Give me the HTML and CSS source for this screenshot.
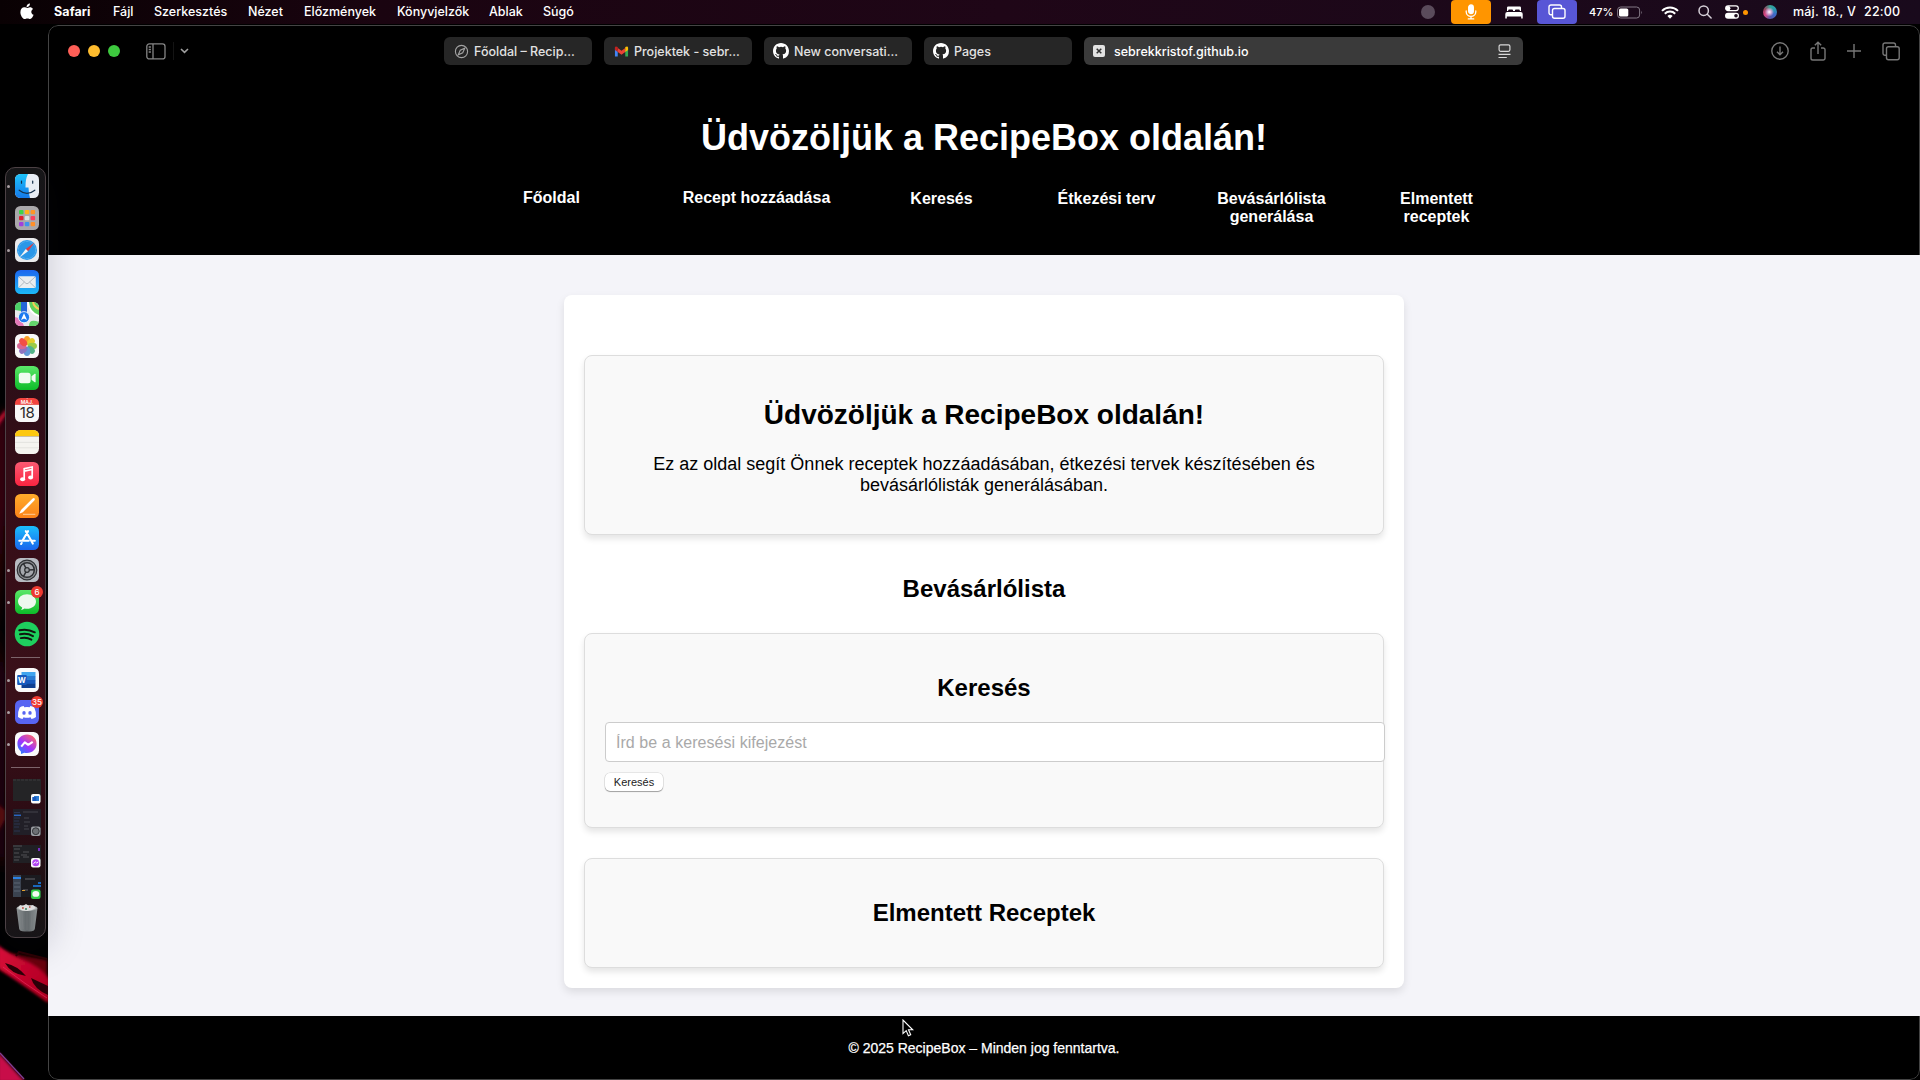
FILE: index.html
```html
<!DOCTYPE html>
<html lang="hu">
<head>
<meta charset="utf-8">
<title>Főoldal – RecipeBox</title>
<link rel="stylesheet" href="styles.css">
</head>
<body>
<div class="desktop">
  <nav class="menubar">
    <svg class="apple" viewBox="0 0 14 17"><path d="M9.9.4c.1 1.100-.3 2-.9 2.700-.6.700-1.500 1.200-2.400 1.100-.1-1 .3-2 .9-2.600C8.100.9 9.100.4 9.900.4zM7.100 5c.6 0 1.500-.8 2.900-.8 1.100 0 2.300.6 3 1.700-2.500 1.500-2.100 4.900.6 5.900-.5 1.500-2 4.200-3.500 4.200-1 0-1.400-.6-2.700-.6s-1.700.6-2.600.6C2.900 16.100.4 12.600.4 9.200.4 6 2.300 4.300 4.200 4.300 5.500 4.300 6.400 5 7.100 5z" fill="#fff"/></svg>
    <div class="menus"><b>Safari</b><span>Fájl</span><span>Szerkesztés</span><span>Nézet</span><span>Előzmények</span><span>Könyvjelzők</span><span>Ablak</span><span>Súgó</span></div>
    <div class="status">
      <i class="rec"></i>
      <span class="pill mic"><svg width="12" height="16" viewBox="0 0 12 16" fill="none" stroke="#fff" stroke-width="1.300" stroke-linecap="round"><rect x="3.700" y="1" width="4.600" height="8.500" rx="2.300" fill="#fff"/><path d="M1.200 7v.8a4.800 4.600 0 0 0 9.600 0V7M6 12.500v2.300M3.300 14.900h5.400"/></svg></span>
      <svg width="18" height="13" viewBox="0 0 18 13" fill="#fff"><path d="M2 5V1.800Q2 .6 3.200.6h11.600Q16 .6 16 1.800V5h-1.200V4.300q0-.9-.9-.9h-3q-.9 0-.9.9V5H8V4.300q0-.9-.9-.9h-3q-.9 0-.9.900V5zM.3 8Q.3 6 2.300 6h13.400q2 0 2 2v4.500h-1.500v-2H1.800v2H.3z"/></svg>
      <span class="pill share"><svg width="18" height="16" viewBox="0 0 18 16" fill="none" stroke="#fff" stroke-width="1.400"><path d="M4 10.800H3a2 2 0 0 1-2-2V3a2 2 0 0 1 2-2h8.500a2 2 0 0 1 2 2v1"/><rect x="4.500" y="4.500" width="12.500" height="9.800" rx="2"/></svg></span>
      <span class="pct">47%</span>
      <svg width="26" height="13" viewBox="0 0 26 13"><rect x=".6" y="1" width="22" height="11" rx="3" fill="none" stroke="#837985"/><rect x="2" y="2.500" width="9.300" height="8" rx="1.600" fill="#fff"/><path d="M24 4.800q1.500 1.700 0 3.400" fill="#837985"/></svg>
      <svg width="18" height="13" viewBox="0 0 18 13" fill="none" stroke="#fff" stroke-width="2"><path d="M1 4.900a11.400 11.400 0 0 1 16 0M3.800 7.800a7.300 7.300 0 0 1 10.400 0"/><path d="M6.400 10.100a3.700 3.700 0 0 1 5.200 0L9 12.700z" fill="#fff" stroke="none"/></svg>
      <svg width="14" height="14" viewBox="0 0 14 14" fill="none" stroke="#d6d0d8" stroke-width="1.500" stroke-linecap="round"><circle cx="5.700" cy="5.700" r="4.700"/><path d="m9.300 9.300 3.800 3.700"/></svg>
      <svg width="14" height="14" viewBox="0 0 14 14"><rect x=".7" y=".9" width="12.600" height="4.700" rx="2.350" fill="none" stroke="#fff" stroke-width="1.200"/><circle cx="3.100" cy="3.250" r="2.300" fill="#fff"/><rect y="7.700" width="14" height="6" rx="3" fill="#fff"/><circle cx="11" cy="10.700" r="1.800" fill="#201020"/></svg>
      <i class="dot"></i>
      <i class="siri"></i>
      <span class="date">máj. 18., V</span><span class="date">22:00</span>
    </div>
  </nav>

  <div class="stage">
    <aside class="side">
      <svg class="wallpaper" viewBox="0 0 48 1056" preserveAspectRatio="none">
        <defs>
          <filter id="soft" x="-50%" y="-50%" width="200%" height="200%"><feGaussianBlur stdDeviation="1.600"/></filter>
          <filter id="wide" x="-80%" y="-50%" width="260%" height="200%"><feGaussianBlur stdDeviation="5"/></filter>
          <linearGradient id="w1" x1="0" y1="0" x2="1" y2="1"><stop offset="0" stop-color="#e0083c"/><stop offset="1" stop-color="#a8041e"/></linearGradient>
        </defs>
        <rect width="48" height="1056" fill="#000"/>
        <path d="M-4 405 3 385 6 384V480L-4 620z" fill="#4a0410" filter="url(#wide)"/>
        <path d="M-3 396 6 385V391L-3 404z" fill="#c2082f" filter="url(#soft)"/>
        <path d="M-3 600 6 650 5 850-3 830z" fill="#2c0309" filter="url(#wide)"/>
        <path d="M-2 780 5 786V796L-2 808z" fill="#5a0710" filter="url(#soft)"/>
        <path d="M0 925 9 929 47 936V978L22 958 0 946z" fill="#6a0008" filter="url(#soft)"/>
        <path d="M-2 921Q8 930 24 936T49 955V979Q24 962-2 944z" fill="url(#w1)" filter="url(#soft)"/>
        <path d="M5 939q13 3 21 13-15-2-21-13zM31 954l17 8v9q-14-6-17-17z" fill="#2a0008"/>
        <path d="M16 932 19 928 47 935" fill="none" stroke="#2d0004" stroke-width="2"/>
        <path d="M3 943Q25 960 47 974" fill="none" stroke="#f23c6c" stroke-width="1" opacity=".5"/>
        <path d="M-2 1028 25 1058H-2z" fill="#c80a48" filter="url(#soft)"/>
        <path d="M0 1029 24 1055" stroke="#804096" stroke-width="1.200"/>
      </svg>
      <div class="dock">
        <div class="app run"><svg viewBox="0 0 24 24"><defs><linearGradient id="fb" x1="0" y1="0" x2="0" y2="1"><stop offset="0" stop-color="#1ec4fb"/><stop offset="1" stop-color="#1579ea"/></linearGradient></defs><rect width="24" height="24" rx="5.500" fill="#e9eef5"/><path d="M5.500 0H13Q10.300 5 10.500 13.500H13.500Q13.600 19 15 24H5.500A5.500 5.500 0 0 1 0 18.500V5.500A5.500 5.500 0 0 1 5.500 0z" fill="url(#fb)"/><path d="M6.500 7v2.200M17.700 7v2.200M4.200 16.200Q12 22.500 19.800 16.200" fill="none" stroke="#15304c" stroke-width="1.200" stroke-linecap="round"/></svg></div>
        <div class="app"><svg viewBox="0 0 24 24"><rect width="24" height="24" rx="5.500" fill="#aaa8ab"/><g><rect x="4" y="4" width="4.500" height="4.200" rx="1" fill="#3ed447"/><rect x="9.800" y="4" width="4.500" height="4.200" rx="1" fill="#ffb31a"/><rect x="15.600" y="4" width="4.500" height="4.200" rx="1" fill="#fd9426"/><rect x="4" y="10" width="4.500" height="4.200" rx="1" fill="#e02030"/><rect x="9.800" y="10" width="4.500" height="4.200" rx="1" fill="#dce0e2"/><rect x="15.600" y="10" width="4.500" height="4.200" rx="1" fill="#fa3f5d"/><rect x="4" y="16" width="4.500" height="4.200" rx="1" fill="#a040dd"/><rect x="9.800" y="16" width="4.500" height="4.200" rx="1" fill="#3f94ec"/><rect x="15.600" y="16" width="4.500" height="4.200" rx="1" fill="#ff8f29"/></g></svg></div>
        <div class="app run"><svg viewBox="0 0 24 24"><rect width="24" height="24" rx="5.500" fill="#e9eaec"/><circle cx="12" cy="12" r="10" fill="#2a97e8"/><circle cx="12" cy="12" r="8.600" fill="none" stroke="#8dcbf5" stroke-width=".8" stroke-dasharray=".6 .8"/><path d="M19.500 4.500 13.100 13.200 10.800 10.900z" fill="#e8383c"/><path d="M4.500 19.500 13.100 13.200 10.800 10.900z" fill="#f4f4f4"/></svg></div>
        <div class="app"><svg viewBox="0 0 24 24"><defs><linearGradient id="ml" x1="0" y1="0" x2="0" y2="1"><stop offset="0" stop-color="#1c66ee"/><stop offset="1" stop-color="#1cb8f8"/></linearGradient></defs><rect width="24" height="24" rx="5.500" fill="url(#ml)"/><rect x="3.200" y="6.200" width="17.600" height="11.800" rx="1.500" fill="#e9edf0"/><path d="m3.700 6.800 7.200 6.500q1.100.9 2.200 0l7.200-6.500M3.800 17.500l5.600-5.400M20.200 17.500l-5.600-5.400" fill="none" stroke="#9fa9b3" stroke-width=".8"/></svg></div>
        <div class="app"><svg viewBox="0 0 24 24"><defs><clipPath id="mc"><rect width="24" height="24" rx="5.500"/></clipPath></defs><g clip-path="url(#mc)"><rect width="24" height="24" fill="#e9e9ec"/><path d="M13 0H24V14Q14 12 13 0z" fill="#5fd05c"/><path d="M0 8 6 9V0H0z" fill="#4ed068"/><path d="M14 24Q14 16 24 20v4z" fill="#63d56b"/><path d="M0 15Q7 16 9 24H0z" fill="#e579b8"/><path d="M6 0h6v12H6z" fill="#2467d8"/><path d="M13 0q1 11 11 14" fill="none" stroke="#fff" stroke-width="2"/><path d="M18 0q1 5 6 7" fill="none" stroke="#f5cb56" stroke-width="2"/></g><circle cx="9" cy="15.200" r="5.600" fill="#1c7af0" stroke="#fff" stroke-width=".8"/><path d="M9 11.200 12 18 9 16.500 6 18z" fill="#fff"/></svg></div>
        <div class="app"><svg viewBox="0 0 24 24"><rect width="24" height="24" rx="5.500" fill="#f8f8f8"/><g opacity=".95"><ellipse cx="12" cy="6.600" rx="3.200" ry="4.600" fill="#fb9c20"/><ellipse cx="12" cy="6.600" rx="3.200" ry="4.600" fill="#e5cb22" transform="rotate(45 12 12)"/><ellipse cx="12" cy="6.600" rx="3.200" ry="4.600" fill="#99c93e" transform="rotate(90 12 12)"/><ellipse cx="12" cy="6.600" rx="3.200" ry="4.600" fill="#4bb082" transform="rotate(135 12 12)"/><ellipse cx="12" cy="6.600" rx="3.200" ry="4.600" fill="#5a92d6" transform="rotate(180 12 12)"/><ellipse cx="12" cy="6.600" rx="3.200" ry="4.600" fill="#8a6cbe" transform="rotate(225 12 12)"/><ellipse cx="12" cy="6.600" rx="3.200" ry="4.600" fill="#d6608f" transform="rotate(270 12 12)"/><ellipse cx="12" cy="6.600" rx="3.200" ry="4.600" fill="#f2463d" transform="rotate(315 12 12)"/></g></svg></div>
        <div class="app"><svg viewBox="0 0 24 24"><defs><linearGradient id="ft" x1="0" y1="0" x2="0" y2="1"><stop offset="0" stop-color="#5ce769"/><stop offset="1" stop-color="#0dbc29"/></linearGradient></defs><rect width="24" height="24" rx="5.500" fill="url(#ft)"/><rect x="3.800" y="6.800" width="11.800" height="10.400" rx="2.500" fill="#f0fbf1"/><path d="m16.500 10.300 3.200-2.500q.9-.5.9.5v7.400q0 1-.9.500l-3.200-2.500z" fill="#f0fbf1"/></svg></div>
        <div class="app"><svg viewBox="0 0 24 24"><path d="M0 6.200h24v12.300a5.500 5.500 0 0 1-5.500 5.500h-13A5.500 5.500 0 0 1 0 18.500z" fill="#f8f8f8"/><path d="M0 6.800V5.500A5.500 5.500 0 0 1 5.500 0h13A5.500 5.500 0 0 1 24 5.500v1.300z" fill="#f3443f"/><text x="12" y="5.700" font-size="5" font-weight="600" fill="#fff" text-anchor="middle">MÁJ.</text><text x="12" y="20" font-size="15" fill="#2b2b2b" text-anchor="middle" letter-spacing="-.5">18</text></svg></div>
        <div class="app"><svg viewBox="0 0 24 24"><rect width="24" height="24" rx="5.500" fill="#f5f4f0"/><path d="M0 6V5.500A5.500 5.500 0 0 1 5.500 0h13A5.500 5.500 0 0 1 24 5.500V6z" fill="#fdc80e"/><path d="M0 6.500h24" stroke="#b9a980" stroke-width=".7"/><path d="M0 12.400h24M0 17.800h24" stroke="#dcdcd9" stroke-width=".7"/></svg></div>
        <div class="app"><svg viewBox="0 0 24 24"><defs><linearGradient id="mu" x1="0" y1="0" x2="0" y2="1"><stop offset="0" stop-color="#fb5a72"/><stop offset="1" stop-color="#fa2440"/></linearGradient></defs><rect width="24" height="24" rx="5.500" fill="url(#mu)"/><path d="M9.200 17V6.700L17.200 5v10.200M9.200 9.200l8-1.700" fill="none" stroke="#fff" stroke-width="1.700"/><ellipse cx="7.600" cy="17.300" rx="2.500" ry="2" fill="#fff"/><ellipse cx="15.600" cy="15.600" rx="2.500" ry="2" fill="#fff"/></svg></div>
        <div class="app"><svg viewBox="0 0 24 24"><defs><linearGradient id="pg" x1="0" y1="0" x2="0" y2="1"><stop offset="0" stop-color="#ffac2b"/><stop offset="1" stop-color="#fb8219"/></linearGradient></defs><rect width="24" height="24" rx="5.500" fill="url(#pg)"/><path d="M4.200 19.800 6 16 17.600 4.500q1.400-1 2 0 .7.900-.5 2.200L7.800 18.300z" fill="#fff"/><path d="M8 20.300h12.300" stroke="#ffe0ba" stroke-width=".8"/></svg></div>
        <div class="app"><svg viewBox="0 0 24 24"><defs><linearGradient id="as" x1="0" y1="0" x2="0" y2="1"><stop offset="0" stop-color="#1bbefb"/><stop offset="1" stop-color="#1a65ed"/></linearGradient></defs><rect width="24" height="24" rx="5.500" fill="url(#as)"/><path d="M13 5.200 7.600 14.600M10.800 5.200 17.800 17.600M4.300 14.700h9.400M17 14.700h2.800M6.700 17 6.100 18" fill="none" stroke="#fff" stroke-width="2.100" stroke-linecap="round"/></svg></div>
        <div class="app run"><svg viewBox="0 0 24 24"><rect width="24" height="24" rx="5.500" fill="#b7bbc1"/><circle cx="12" cy="12" r="9.800" fill="#8b8e92" stroke="#2e3033" stroke-width="1.200"/><circle cx="12" cy="12" r="7.300" fill="#a5a8ad" stroke="#2e3033" stroke-width="1.500"/><path d="m12 12 7-.2M12 12 8.500 5.700M12 12l-3.500 6.300" stroke="#2e3033" stroke-width="1.500"/><circle cx="12" cy="12" r="2.300" fill="#9a9da1" stroke="#2e3033" stroke-width="1.200"/></svg></div>
        <div class="app run"><svg viewBox="0 0 24 24"><rect width="24" height="24" rx="5.500" fill="url(#ft)"/><path d="M12 4.200c5 0 9 3.100 9 7.300s-4 7.300-9 7.300q-1.200 0-2.500-.3-1.500 1.400-3.700 1.500 1.200-1 1.400-2.500C4.600 16.200 3 14 3 11.500c0-4.200 4-7.300 9-7.300z" fill="#eef8ee"/></svg><em class="badge">6</em></div>
        <div class="app"><svg viewBox="0 0 24 24"><circle cx="12" cy="12" r="12.300" fill="#1ed05e"/><path d="M4.300 8.300q8-2 15.500 2M5 12.300q7-1.700 13 1.800M5.800 16.100q5.700-1.300 10.600 1.500" fill="none" stroke="#10160f" stroke-width="2" stroke-linecap="round"/></svg></div>
        <hr class="split first">
        <div class="app run"><svg viewBox="0 0 24 24"><rect width="24" height="24" rx="5.500" fill="#fafafa"/><rect x="6.500" y="4" width="14" height="4.200" fill="#41a5ee"/><rect x="6.500" y="8" width="14" height="4.200" fill="#2b7cd3"/><rect x="6.500" y="12" width="14" height="4" fill="#185abd"/><rect x="6.500" y="15.800" width="14" height="4.200" fill="#103f91"/><rect x="2.200" y="7" width="9.600" height="10" rx="1" fill="#185abd"/><text x="7" y="14.700" font-size="7.500" font-weight="700" fill="#fff" text-anchor="middle">W</text></svg></div>
        <div class="app run"><svg viewBox="0 0 24 24"><rect width="24" height="24" rx="5.500" fill="#5865f2"/><path d="M8.700 6q-2.600.4-4 1.500Q2.500 12 3 17q2 1.500 4.500 2l1-1.700q3.500 1 7 0l1 1.700q2.500-.5 4.500-2 .5-5-1.700-9.500-1.400-1.100-4-1.500l-.6 1.200q-2.700-.4-5.400 0z" fill="#fff"/><ellipse cx="9" cy="12.900" rx="1.700" ry="1.900" fill="#5865f2"/><ellipse cx="15" cy="12.900" rx="1.700" ry="1.900" fill="#5865f2"/></svg><em class="badge">35</em></div>
        <div class="app run"><svg viewBox="0 0 24 24"><defs><linearGradient id="ms" x1="0" y1="1" x2=".8" y2="0"><stop offset="0" stop-color="#0a8cff"/><stop offset=".5" stop-color="#a033ff"/><stop offset="1" stop-color="#ff6568"/></linearGradient></defs><rect width="24" height="24" rx="5.500" fill="#fafafa"/><path d="M12 2.600c5.500 0 9.600 4 9.600 9.200s-4.100 9.200-9.600 9.200q-1.300 0-2.700-.3l-3.200 1.200-.2-2.500Q2.400 16.500 2.400 11.800C2.400 6.600 6.500 2.600 12 2.600z" fill="url(#ms)"/><path d="m6.200 14.700 3.600-4.400 3.400 2.500 4.500-3" fill="none" stroke="#fff" stroke-width="2.100" stroke-linejoin="round"/></svg></div>
        <hr class="split second">
        <div class="thumb t1"><svg viewBox="0 0 28 24"><rect width="28" height="22" fill="#242426"/><path d="M0 1h28" stroke="#3b3b3d" stroke-dasharray="3 1"/><rect x="18" y="15" width="9.500" height="9.500" rx="2" fill="#fafafa"/><path d="M21 17h5v5h-5z" fill="#2b7cd3"/><path d="M19.300 18h4v4h-4z" fill="#185abd"/></svg></div>
        <div class="thumb t2"><svg viewBox="0 0 28 27"><rect width="28" height="26" fill="#211f27"/><path d="M1 3.500h6M1 9h6M1 12h5M1 15h6M1 18h5M1 22h6" stroke="#2c3450"/><path d="M1 6.300h7" stroke="#2b65c0" stroke-width="1.500"/><path d="M10 3h15M11 9h5M11 13h6M11 17h4M11 20h5" stroke="#45444c"/><rect x="18" y="17.500" width="9.500" height="9.500" rx="2" fill="#9b9ea3"/><circle cx="22.800" cy="22.200" r="3.400" fill="#6d7074" stroke="#34363a"/></svg></div>
        <div class="thumb t3"><svg viewBox="0 0 28 24"><rect width="28" height="18" fill="#202024"/><path d="M0 1h9M1 4h6M1 8h5M1 12h6M1 15h5M10 7h6M10 12h6M8 10h6" stroke="#505055"/><path d="M25 3h2v3h-2z" fill="#762dc0"/><rect x="18" y="13" width="9.500" height="9.500" rx="2" fill="#fafafa"/><circle cx="22.800" cy="17.700" r="3.500" fill="#b245f3"/><path d="m20.500 18.800 1.800-2 1.300 1.200 1.800-1.200" fill="none" stroke="#fff"/></svg></div>
        <div class="thumb t4"><svg viewBox="0 0 28 24"><rect width="28" height="22" fill="#1b1b20"/><rect width="8" height="22" fill="#3b4350"/><path d="M0 3h8" stroke="#2c83e5" stroke-width="2"/><path d="M1 8h6M1 12h6M1 16h6" stroke="#5c6674"/><path d="M12 4h10M10 15h5" stroke="#65656b"/><path d="M25 8h3M20 11h8" stroke="#1b82ef" stroke-width="1.500"/><path d="M9 15.500h3" stroke="#e0a030"/><rect x="18" y="14.500" width="9.500" height="9.500" rx="2" fill="#35cf4c"/><ellipse cx="22.800" cy="18.900" rx="3.500" ry="2.900" fill="#f3fbf3"/></svg></div>
        <div class="trash"><svg viewBox="0 0 24 30"><defs><linearGradient id="tr"><stop offset="0" stop-color="#8b9092"/><stop offset=".5" stop-color="#61676a"/><stop offset="1" stop-color="#8b9092"/></linearGradient></defs><path d="M1.500 5h21L19.800 26q-.3 2-3 2.200-4.800.6-9.600 0-2.700-.2-3-2.200z" fill="url(#tr)"/><ellipse cx="12" cy="5" rx="10.400" ry="3" fill="#aab0b0"/><path d="m3 5 2-3 3 1 3-2 3 2 4-1 3 3-4 2-5 1-5-.5z" fill="#dedede"/><path d="M7 5h1.800M14 4h1.500" stroke="#ba5040" stroke-width="1.500"/><path d="M10 6h2" stroke="#37855c" stroke-width="1.500"/><path d="m7 9 1 17M12 9v18M17 9l-1 17" stroke="#7d8285" stroke-width=".6"/></svg></div>
      </div>
    </aside>

    <div class="window">
      <div class="toolbar">
        <div class="lights"><i class="r"></i><i class="y"></i><i class="g"></i></div>
        <svg class="sidebar" width="20" height="17" viewBox="0 0 20 17" fill="none" stroke="#858585" stroke-width="1.300"><rect x=".8" y=".9" width="18.200" height="15" rx="2.500"/><path d="M7 1v15M2.700 4h2.200M2.700 6.500h2.200M2.700 9h2.200"/></svg>
        <i class="rule"></i>
        <svg class="chev" width="9" height="6" viewBox="0 0 9 6" fill="none" stroke="#a0a0a0" stroke-width="1.600"><path d="m1 1 3.500 3.300L8 1"/></svg>
        <div class="tabs">
          <div class="tab"><svg viewBox="0 0 16 16" fill="none" stroke="#a3a3a3" stroke-width="1.200"><circle cx="8" cy="8" r="6.500"/><path d="m11.500 4.500-2.200 4.800-4.800 2.200 2.200-4.800z"/></svg><span>Főoldal – Recip...</span></div>
          <div class="tab"><svg viewBox="0 0 16 16"><path d="M1 3.500V13.300h3V7z" fill="#4285f4"/><path d="M15 3.500V13.300h-3V7z" fill="#34a853"/><path d="M4 8.500V4.200L8 7.200l4-3v4.300l-4 3z" fill="#ea4335"/><path d="M1 6.300V4Q1.200 1.700 4 3.200v5.300z" fill="#c5221f"/><path d="M15 6.300V4q-.2-2.300-3-.8v5.300z" fill="#fbbc04"/></svg><span>Projektek - sebr...</span></div>
          <div class="tab"><svg class="gh" viewBox="0 0 16 16"><path fill="#fff" d="M8 0C3.580 0 0 3.580 0 8c0 3.540 2.290 6.530 5.470 7.590.4.070.55-.17.55-.38 0-.19-.01-.82-.01-1.490-2.010.37-2.530-.49-2.690-.94-.09-.23-.48-.94-.82-1.130-.28-.15-.68-.52-.01-.53.63-.01 1.080.58 1.230.82.72 1.210 1.870.87 2.330.66.070-.52.28-.87.51-1.070-1.780-.2-3.640-.89-3.640-3.950 0-.87.31-1.590.82-2.150-.08-.2-.36-1.020.08-2.120 0 0 .67-.21 2.200.82a7.600 7.600 0 0 1 4 0c1.530-1.040 2.200-.82 2.200-.82.44 1.100.16 1.920.08 2.120.51.56.82 1.270.82 2.150 0 3.070-1.870 3.750-3.650 3.950.29.25.54.73.54 1.480 0 1.070-.01 1.930-.01 2.200 0 .21.15.46.55.38A8.010 8.010 0 0 0 16 8c0-4.420-3.580-8-8-8z"/></svg><span>New conversati...</span></div>
          <div class="tab"><svg class="gh" viewBox="0 0 16 16"><path fill="#fff" d="M8 0C3.580 0 0 3.580 0 8c0 3.540 2.290 6.530 5.470 7.590.4.070.55-.17.55-.38 0-.19-.01-.82-.01-1.490-2.010.37-2.530-.49-2.690-.94-.09-.23-.48-.94-.82-1.130-.28-.15-.68-.52-.01-.53.63-.01 1.080.58 1.230.82.72 1.210 1.870.87 2.330.66.070-.52.28-.87.51-1.070-1.780-.2-3.640-.89-3.640-3.950 0-.87.31-1.590.82-2.150-.08-.2-.36-1.020.08-2.120 0 0 .67-.21 2.200.82a7.600 7.600 0 0 1 4 0c1.530-1.040 2.200-.82 2.200-.82.44 1.100.16 1.920.08 2.120.51.56.82 1.270.82 2.150 0 3.070-1.870 3.750-3.650 3.950.29.25.54.73.54 1.480 0 1.070-.01 1.930-.01 2.200 0 .21.15.46.55.38A8.010 8.010 0 0 0 16 8c0-4.420-3.580-8-8-8z"/></svg><span>Pages</span></div>
          <div class="tab active"><svg class="close" viewBox="0 0 12 12"><rect width="12" height="12" rx="2" fill="#e3e3e3"/><path d="m3.700 3.700 4.600 4.600M8.300 3.700 3.700 8.300" stroke="#333" stroke-width="1.500"/></svg><span>sebrekkristof.github.io</span><svg class="reader" viewBox="0 0 13 15" fill="none" stroke="#d8d8d8" stroke-width="1.200"><rect x="1.100" y=".8" width="10.800" height="6.500" rx="1.500"/><path d="M.5 10.300h12M.5 13.500h8.300"/></svg></div>
        </div>
        <div class="tools">
          <svg width="18" height="18" viewBox="0 0 18 18"><circle cx="9" cy="9" r="8.200"/><path d="M9 4.500v8M6 9.700l3 3 3-3"/></svg>
          <svg width="16" height="20" viewBox="0 0 16 20"><path d="M5 7H2.800A1.800 1.800 0 0 0 1 8.800v8.400A1.800 1.800 0 0 0 2.800 19h10.400a1.800 1.800 0 0 0 1.800-1.800V8.800A1.800 1.800 0 0 0 13.200 7H11M8 13V1.200M4.800 4.300 8 1.200l3.200 3.100"/></svg>
          <svg width="14" height="14" viewBox="0 0 14 14"><path d="M7 0v14M0 7h14"/></svg>
          <svg width="18" height="19" viewBox="0 0 18 19"><path d="M4 13.300H3a2 2 0 0 1-2-2V3a2 2 0 0 1 2-2h8.500a2 2 0 0 1 2 2v1.300"/><rect x="4.500" y="4.800" width="12.700" height="13" rx="2"/></svg>
        </div>
      </div>

      <header class="site-header">
        <h1>Üdvözöljük a RecipeBox oldalán!</h1>
        <nav class="site-nav"><a class="link">Főoldal</a><a class="link">Recept hozzáadása</a><a>Keresés</a><a>Étkezési terv</a><a>Bevásárlólista<br>generálása</a><a>Elmentett<br>receptek</a></nav>
      </header>
      <main class="page">
        <div class="container">
          <section class="card">
            <h2 class="hero">Üdvözöljük a RecipeBox oldalán!</h2>
            <p>Ez az oldal segít Önnek receptek hozzáadásában, étkezési tervek készítésében és<br>bevásárlólisták generálásában.</p>
          </section>
          <h2 class="loose">Bevásárlólista</h2>
          <section class="card search">
            <h2>Keresés</h2>
            <input type="text" placeholder="Írd be a keresési kifejezést">
            <button>Keresés</button>
          </section>
          <section class="card saved"><h2>Elmentett Receptek</h2></section>
        </div>
      </main>
      <footer class="site-footer">© 2025 RecipeBox – Minden jog fenntartva.</footer>
    </div>
  </div>
  <svg class="cursor" viewBox="0 0 12 18"><path d="M1 1v13.600l3.200-3 2.200 5.200 2.300-1-2.200-5h4.200z" fill="#000" stroke="#fff" stroke-width="1.100"/></svg>
</div>
</body>
</html>
```
FILE: styles.css
```css
* { box-sizing: border-box; }
html, body { margin: 0; height: 100%; overflow: hidden; background: #000; }
.desktop { position: relative; width: 1920px; height: 1080px; display: flex; flex-direction: column; background: #000; font-family: Inter, "Liberation Sans", sans-serif; color: #fff; }

/* menu bar */
.menubar { height: 24px; display: flex; align-items: center; background: linear-gradient(90deg, #090103 0, #1a0410 380px, #1f0617 1000px, #190a1c 1920px); font-size: 12.500px; line-height: 24px; font-weight: 500; }
.apple { width: 14px; height: 17px; margin: 0 20px 2px; flex: none; }
.menus { flex: none; display: grid; width: 640px; grid-template-columns: 59px 41px 94px 56px 93px 92px 54px auto; white-space: nowrap; }
.menus b { font-weight: 700; letter-spacing: .1px; }
.status { flex: none; margin-left: 727px; display: grid; height: 24px; align-items: center; white-space: nowrap; grid-template-columns: 30px 54px 32px 52px 28px 44px 37px 27px 17px 21px 30px 71px 56px; }
.rec { width: 14px; height: 14px; border-radius: 50%; background: #5a4b5b; }
.pill { width: 40px; height: 24px; border-radius: 4px; display: flex; align-items: center; justify-content: center; }
.mic { background: #ff9500; }
.share { background: #5856d6; }
.pct { font-size: 11px; }
.dot { width: 5px; height: 5px; border-radius: 50%; background: #ff9500; margin-left: 1px; }
.siri { width: 14px; height: 14px; border-radius: 50%; background: radial-gradient(circle at 45% 50%, #fff 0, #d5a9d5 20%, transparent 45%), conic-gradient(#37a695, #2799b0, #3e67c9, #5757a8, #d94481, #99425d, #37a695); }
.date { font-size: 12.500px; letter-spacing: .2px; }

/* desktop strip and dock */
.stage { flex: 1; display: flex; min-height: 0; }
.side { position: relative; z-index: 2; width: 48px; flex: none; padding: 143px 3px 0 5px; }
.wallpaper { position: absolute; left: 0; top: 0; width: 48px; height: 1056px; }
.dock { position: relative; width: 41px; height: 771px; border: 1px solid #4c4145; border-radius: 10px; background: linear-gradient(#161618 0, #1b1318 100px, #2b0f18 190px, #350d17 300px, #3a1019 540px, #2d0c14 640px, #1c1113 730px, #171518 100%); box-shadow: 2px 8px 36px 2px rgba(20, 20, 40, .17); padding: 6px 0 0 9px; display: flex; flex-direction: column; }
.dock svg { display: block; overflow: visible; font-family: Inter, sans-serif; }
.app { position: relative; width: 24px; height: 24px; margin-bottom: 8px; flex: none; }
.app svg { width: 24px; height: 24px; }
.run::before { content: ""; position: absolute; left: -8px; top: 11px; width: 3px; height: 3px; border-radius: 50%; background: #aaa0a4; }
.badge { position: absolute; left: 16px; top: -4px; width: 12px; height: 12px; border-radius: 6px; background: #ef3a30; font: 500 8px/12px Inter, sans-serif; text-align: center; }
.split { width: 29px; height: 1px; border: 0; background: #7d646b; flex: none; }
.first { margin: 3px 0 10px -4px; }
.second { margin: 3px 0 11px -4px; }
.thumb { width: 28px; margin-left: -2px; flex: none; }
.thumb svg { width: 28px; }
.t1 { height: 30px; }
.t2 { height: 36px; }
.t3 { height: 30px; }
.t4 { height: 28px; }
.trash { width: 24px; margin-top: 0; }
.trash svg { width: 24px; height: 30px; }

/* browser window */
.window { position: relative; flex: 1; display: flex; flex-direction: column; margin-top: 1px; min-width: 0; background: #000; border-radius: 10px; overflow: hidden; font-family: "Liberation Sans", Arial, sans-serif; }
.window::after { content: ""; position: absolute; inset: 0; border: 1px solid #444; border-radius: 10px; clip-path: polygon(0 0, 100% 0, 100% 230px, 0 230px, 0 991px, 100% 991px, 100% 100%, 0 100%, 0 991px, 0 230px); }
.toolbar { height: 52px; flex: none; display: flex; align-items: center; font-family: Inter, sans-serif; }
.lights { display: flex; gap: 8px; margin-left: 20px; }
.lights i { width: 12px; height: 12px; border-radius: 50%; }
.r { background: #fe5f57; }
.y { background: #febc2e; }
.g { background: #3ec93f; }
.sidebar { margin-left: 26px; }
.rule { width: 1px; height: 18px; margin-left: 7px; background: #141414; }
.chev { margin-left: 6px; }
.tabs { display: flex; gap: 12px; margin-left: 255px; }
.tab { width: 148px; height: 28px; border-radius: 6px; background: #262626; display: flex; align-items: center; padding-left: 10px; font-size: 12.500px; font-weight: 500; color: #e2e2e2; white-space: nowrap; }
.tab svg { width: 15px; height: 15px; margin-right: 5px; flex: none; }
.tab .gh { width: 16px; height: 16px; margin: 0 5px 0 -1px; }
.tab.active { width: 439px; background: #3a3a3a; color: #fff; padding: 0 12px 0 9px; }
.tab .close { width: 12px; height: 12px; margin-right: 9px; }
.tab .reader { width: 13px; height: 15px; margin: 1px 0 0 auto; }
.tools { margin-left: 248px; display: flex; align-items: center; gap: 21px; }
.tools svg { fill: none; stroke: #777; stroke-width: 1.400; }

/* site */
.site-header { height: 178px; flex: none; padding-top: 40px; text-align: center; }
h1 { margin: 0; font-size: 36px; line-height: 42px; }
.site-nav { display: grid; grid-template-columns: 205px 205px repeat(4, 165px); justify-content: center; align-items: start; margin-top: 31px; font-size: 16px; line-height: 18px; font-weight: 700; }
.link { margin-top: -1px; }
.page { height: 761px; flex: none; background: #f4f4f9; color: #000; padding-top: 40px; }
.container { width: 840px; height: 693px; margin: 0 auto; padding: 60px 20px 0; background: #fff; border-radius: 8px; box-shadow: 0 4px 8px rgba(0, 0, 0, .1); }
.card { height: 180px; padding: 43px 20px 0; border: 1px solid #ddd; border-radius: 8px; background: #f9f9f9; box-shadow: 0 4px 6px rgba(0, 0, 0, .1); text-align: center; }
h2 { margin: 0; font-size: 24px; line-height: 28px; text-align: center; }
.hero { font-size: 28px; line-height: 32px; }
.card p { margin: 23px 0 0; font-size: 18px; line-height: 21px; }
.loose { margin: 40px 0 30px; }
.card.search { height: 195px; padding-top: 40px; text-align: left; }
.search input { display: block; width: 780px; height: 40px; margin: 20px 0 11px; padding: 2px 10px 0; border: 1px solid #ccc; border-radius: 4px; background: #fff; font: 16px "Liberation Sans", Arial, sans-serif; letter-spacing: .05px; }
.search input::placeholder { color: #a9a9a9; opacity: 1; }
.search button { display: block; width: 58px; height: 18px; padding: 0; border: 0; border-radius: 5px; background: #fff; color: #222; font: 11px/18px "Liberation Sans", Arial, sans-serif; box-shadow: 0 0 0 .500px rgba(0, 0, 0, .15), 0 1px 1px rgba(0, 0, 0, .3); }
.saved { height: 110px; margin-top: 30px; padding-top: 40px; }
.site-footer { height: 64px; flex: none; text-align: center; font-size: 14px; line-height: 16px; padding-top: 24px; -webkit-text-stroke: .25px #fff; }
.cursor { position: absolute; left: 902px; top: 1019px; width: 12px; height: 18px; }
```
